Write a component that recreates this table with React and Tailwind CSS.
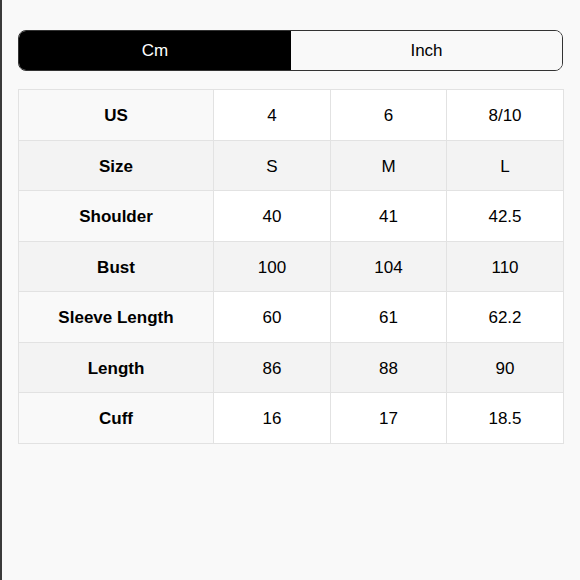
const rows = [
  ['US', '4', '6', '8/10'],
  ['Size', 'S', 'M', 'L'],
  ['Shoulder', '40', '41', '42.5'],
  ['Bust', '100', '104', '110'],
  ['Sleeve Length', '60', '61', '62.2'],
  ['Length', '86', '88', '90'],
  ['Cuff', '16', '17', '18.5'],
]

const App = () => {
  return (
    <div
      className="min-h-[580px] w-[580px] bg-[#f9f9f9] border-l-2 border-[#3a3a3a] pl-4 pr-[17px] pt-[30px] text-black"
      style={{ fontFamily: '"Liberation Sans", Arial, sans-serif' }}
    >
      {/* Unit toggle */}
      <div className="flex h-[41px] w-[545px] rounded-[8px] border-[1.5px] border-[#333] overflow-hidden text-[17px]">
        <button className="w-[272px] bg-black text-white">Cm</button>
        <button className="flex-1 bg-[#f9f9f9] text-black">Inch</button>
      </div>

      {/* Size table */}
      <table className="mt-[18px] w-[545px] border-collapse text-[17px] table-fixed">
        <colgroup>
          <col className="w-[195px]" />
          <col className="w-[117px]" />
          <col className="w-[116px]" />
          <col className="w-[117px]" />
        </colgroup>
        <tbody>
          {rows.map((r, i) => (
            <tr key={r[0]} className={i % 2 ? 'bg-[#f3f3f3]' : 'bg-white'}>
              {r.map((c, j) => (
                <td
                  key={j}
                  className={`h-[50.5px] border border-[#e2e2e2] text-center p-0 pt-[2px] ${
                    j === 0 ? 'font-bold ' + (i % 2 ? 'bg-[#f3f3f3]' : 'bg-[#f9f9f9]') : ''
                  }`}
                >
                  {c}
                </td>
              ))}
            </tr>
          ))}
        </tbody>
      </table>
    </div>
  )
}

export default App
